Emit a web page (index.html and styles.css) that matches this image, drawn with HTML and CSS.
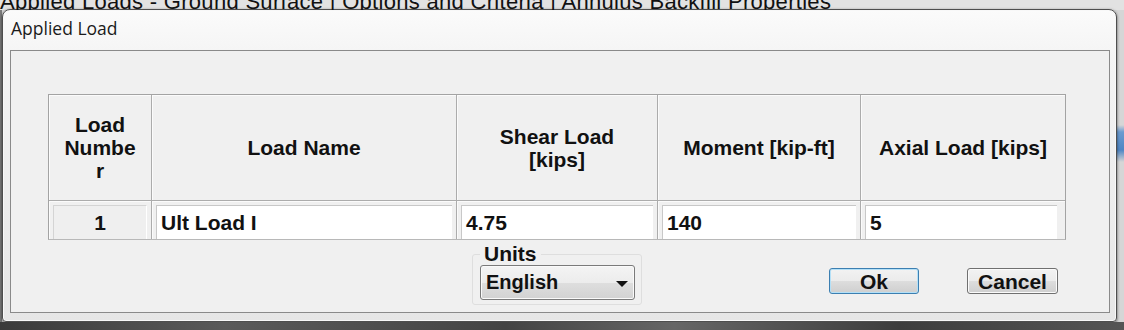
FILE: index.html
```html
<!DOCTYPE html>
<html lang="en">
<head>
    <meta charset="UTF-8">
    <title>Applied Load</title>
    <link rel="stylesheet" href="styles.css">
</head>
<body>
    <div class="screen">
        <div class="app-tabs">
            <span>Applied Loads - Ground Surface | Options and Criteria | Annulus Backfill Properties</span>
        </div>

        <div class="dialog">
            <div class="title">Applied Load</div>

            <div class="client">
                <div class="grid">
                    <div class="head">Load<br>Numbe<br>r</div>
                    <div class="head">Load Name</div>
                    <div class="head">Shear Load<br>[kips]</div>
                    <div class="head">Moment [kip-ft]</div>
                    <div class="head">Axial Load [kips]</div>

                    <div class="cell"><div class="readonly">1</div></div>
                    <div class="cell"><div class="edit">Ult Load I</div></div>
                    <div class="cell"><div class="edit">4.75</div></div>
                    <div class="cell"><div class="edit">140</div></div>
                    <div class="cell"><div class="edit">5</div></div>
                </div>

                <div class="footer">
                    <fieldset class="units">
                        <legend>Units</legend>
                        <div class="combo">
                            <span>English</span>
                            <span class="arrow"></span>
                        </div>
                    </fieldset>
                    <button class="btn ok">Ok</button>
                    <button class="btn cancel">Cancel</button>
                </div>
            </div>
        </div>

        <div class="app-bottom"></div>
    </div>
</body>
</html>
```

FILE: styles.css
```css
body {
    margin: 0;
    padding: 0;
    background: #cfcfcf;
}

.screen {
    width: 1124px;
    height: 330px;
    overflow: hidden;
    background:
        linear-gradient(to bottom, transparent 125px, #6b9bd0 132px, #4f86c4 150px, transparent 162px) right top / 7px 100% no-repeat,
        linear-gradient(to right, #7a7a7a 0, #7a7a7a 2px, transparent 2px),
        #d6d6d6;
}

/* tab strip of the app behind the dialog */
.app-tabs {
    height: 10px;
    overflow: hidden;
    white-space: nowrap;
    font-family: "Liberation Sans", Arial, sans-serif;
    font-size: 22px;
    color: #111;
    background: #e2e2e2;
}

.app-tabs span {
    display: block;
    line-height: 20px;
    margin-top: -8px;
    letter-spacing: 0.3px;
}

.dialog {
    margin: -1px 0 0 2px;
    width: 1115px;
    height: 313px;
    box-sizing: border-box;
    border: 1px solid #4e4e4e;
    border-radius: 8px 8px 4px 4px;
    background: linear-gradient(to bottom, #fbfbfb 0, #f4f4f4 15%, #e6e6e6 100%);
    box-shadow: inset 0 0 0 1px #f8f8f8, 0 1px 3px rgba(0, 0, 0, 0.6);
    padding: 0 6px 8px 7px;
    display: flex;
    flex-direction: column;
}

.title {
    height: 40px;
    box-sizing: border-box;
    padding: 6px 0 0 1px;
    font-family: "Open Sans", "Noto Sans", sans-serif;
    font-size: 17.5px;
    line-height: 24px;
    color: #1b1b1b;
}

.client {
    flex: 1;
    border: 1px solid #8a8a8a;
    background: #f0f0f0;
    padding: 43px 0 0 37px;
    font-family: "Liberation Sans", Arial, sans-serif;
    font-weight: bold;
    color: #111;
}

.grid {
    display: grid;
    grid-template-columns: 103px 305px 201px 203px 204px;
    grid-template-rows: 106px 38px;
    width: fit-content;
    border: 1px solid #a3a3a3;
    border-bottom-color: #b8b8b8;
}

.head {
    display: flex;
    align-items: center;
    justify-content: center;
    text-align: center;
    font-size: 21px;
    line-height: 23px;
    border-right: 1px solid #acacac;
    border-bottom: 1px solid #acacac;
    box-shadow: inset 1px 1px 0 #fbfbfb;
}

.head:nth-child(5) {
    border-right: none;
}

.cell {
    padding: 4px 4px 0 4px;
    border-right: 1px solid #acacac;
    box-shadow: inset 1px 1px 0 #fbfbfb;
    font-size: 21px;
    display: flex;
}

.cell:nth-child(10) {
    border-right: none;
    padding-right: 8px;
}

.readonly {
    flex: 1;
    text-align: center;
    line-height: 33px;
    border-top: 1px solid #d4d4d4;
    border-left: 1px solid #d4d4d4;
    border-right: 1px solid #ffffff;
    background: #efefef;
}

.edit {
    flex: 1;
    background: #fff;
    border-top: 1px solid #c8c8c8;
    border-left: 1px solid #c8c8c8;
    padding-left: 4px;
    line-height: 33px;
    white-space: nowrap;
}

.footer {
    display: flex;
    align-items: flex-start;
}

.units {
    margin: 4px 0 0 424px;
    padding: 0 6px 4px 7px;
    width: 155px;
    border: 1px solid #dedede;
    border-radius: 3px;
}

.units legend {
    padding: 0 4px;
    font-size: 21px;
    line-height: 20px;
}

.combo {
    margin-top: 1px;
    height: 35px;
    box-sizing: border-box;
    border: 1px solid #7a7a7a;
    border-radius: 3px;
    background: linear-gradient(to bottom, #f4f4f4 0, #ececec 50%, #dedede 51%, #d2d2d2 100%);
    box-shadow: inset 0 0 0 1px #fafafa;
    display: flex;
    align-items: center;
    justify-content: space-between;
    padding: 0 6px 0 5px;
    font-size: 20px;
}

.arrow {
    width: 0;
    height: 0;
    border-left: 6px solid transparent;
    border-right: 6px solid transparent;
    border-top: 6px solid #111;
    margin-top: 3px;
}

.btn {
    margin-top: 28px;
    width: 90px;
    height: 26px;
    box-sizing: border-box;
    padding: 2px 0 0;
    font-family: "Liberation Sans", Arial, sans-serif;
    font-weight: bold;
    font-size: 21px;
    line-height: 22px;
    color: #111;
    border-radius: 3px;
    background: linear-gradient(to bottom, #f2f2f2 0, #ebebeb 50%, #dddddd 51%, #cfcfcf 100%);
}

.ok {
    margin-left: 187px;
    border: 1px solid #3c7fb1;
    box-shadow: inset 0 0 0 1px #b4e0f7;
}

.cancel {
    margin-left: 48px;
    width: 91px;
    border: 1px solid #707070;
    box-shadow: inset 0 0 0 1px #fbfbfb;
}

.app-bottom {
    height: 8px;
    background: linear-gradient(to right, #3a3a3a 0, #5a5a5a 20%, #444 45%, #666 60%, #3d3d3d 80%, #555 100%);
}
```
